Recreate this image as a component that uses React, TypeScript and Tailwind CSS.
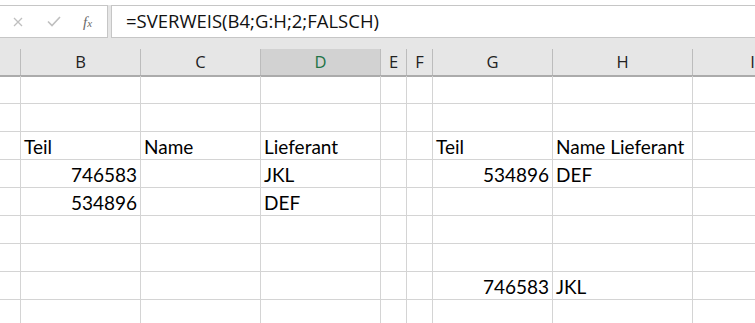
import React from "react";

const cols = [
  { key: "B", w: "w-[120px]" },
  { key: "C", w: "w-[120px]" },
  { key: "D", w: "w-[120px]" },
  { key: "E", w: "w-[26px]" },
  { key: "F", w: "w-[26px]" },
  { key: "G", w: "w-[120px]" },
  { key: "H", w: "w-[140px]" },
  { key: "I", w: "w-[120px]" },
];

type Cell = { text: string; right?: boolean };

// rows shown in the viewport, keyed by column letter
const rows: Record<string, Cell>[] = [
  {},
  {},
  { B: { text: "Teil" }, C: { text: "Name" }, D: { text: "Lieferant" }, G: { text: "Teil" }, H: { text: "Name Lieferant" } },
  { B: { text: "746583", right: true }, D: { text: "JKL" }, G: { text: "534896", right: true }, H: { text: "DEF" } },
  { B: { text: "534896", right: true }, D: { text: "DEF" } },
  {},
  {},
  { G: { text: "746583", right: true }, H: { text: "JKL" } },
  {},
];

function FormulaBar() {
  return (
    <div className="flex h-[33px] mt-[5px] bg-[#e6e6e6]">
      <div className="w-[108px] h-full bg-white border-y border-r border-[#c6c6c6] flex items-center relative">
        <svg className="absolute left-[13px] top-[11px]" width="10" height="10" viewBox="0 0 10 10">
          <path d="M1 1 L9 9 M9 1 L1 9" stroke="#bfbfbf" strokeWidth="1.3" fill="none" />
        </svg>
        <svg className="absolute left-[47px] top-[10px]" width="14" height="11" viewBox="0 0 14 11">
          <path d="M1 5.5 L5 9.5 L13 1" stroke="#bfbfbf" strokeWidth="1.6" fill="none" />
        </svg>
        <span className="absolute left-[83px] top-[5px] text-[15px] italic text-[#6a6a6a] font-['Liberation_Serif',serif]">
          f<span className="text-[11px]">x</span>
        </span>
      </div>
      <div className="w-[3px]" />
      <div className="flex-1 h-full bg-white border-y border-l border-[#c6c6c6] flex items-center pl-[14px]">
        <span className="text-[18.5px] text-[#111] font-['Open_Sans',sans-serif] leading-none">=SVERWEIS(B4;G:H;2;FALSCH)</span>
      </div>
    </div>
  );
}

function HeaderRow() {
  return (
    <div className="flex h-[28px] border-b-2 border-[#ababab] bg-[#e6e6e6]">
      <div className="w-[21px] shrink-0 border-r border-[#bcbcbc]" />
      {cols.map((c) => (
        <div
          key={c.key}
          className={`${c.w} shrink-0 border-r border-[#bcbcbc] ${c.key === "D" ? "bg-[#d2d2d2] text-[#217346]" : "text-[#222]"} flex items-center justify-center text-[16.5px] font-['Open_Sans',sans-serif] leading-none`}
        >
          {c.key}
        </div>
      ))}
    </div>
  );
}

export default function App() {
  return (
    <div className="w-[755px] h-[323px] overflow-hidden bg-white font-['Lato',sans-serif]">
      <div className="bg-[#e6e6e6]">
        <FormulaBar />
        <div className="h-[11px] bg-[#e6e6e6]" />
        <HeaderRow />
      </div>
      <div className="-mt-px">
        {rows.map((r, i) => (
          <div key={i} className="flex h-[28px] border-b border-[#d4d4d4]">
            <div className="w-[21px] shrink-0 border-r border-[#d4d4d4]" />
            {cols.map((c) => {
              const cell = r[c.key];
              return (
                <div
                  key={c.key}
                  className={`${c.w} shrink-0 border-r border-[#d4d4d4] flex items-end pb-[3px] px-[3px] ${cell?.right ? "justify-end" : "justify-start"} text-[19px] leading-none text-black whitespace-nowrap`}
                >
                  {cell?.text}
                </div>
              );
            })}
          </div>
        ))}
      </div>
    </div>
  );
}
